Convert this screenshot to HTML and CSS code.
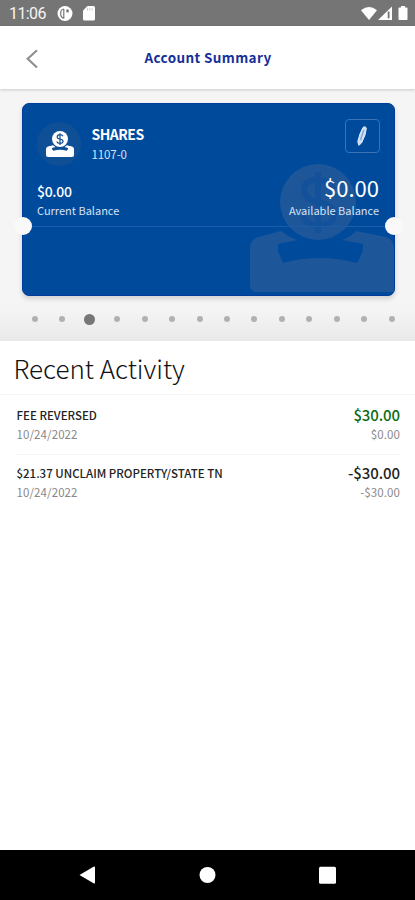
FILE: index.html
```html
<!DOCTYPE html>
<html lang="en">
<head>
<meta charset="utf-8">
<title>Account Summary</title>
<link rel="stylesheet" href="styles.css">
</head>
<body>
<div class="status">
  <span class="clock">11:06</span>
  <svg class="st-app" width="16" height="16" viewBox="0 0 16 16"><circle cx="8" cy="7.500" r="7.500" fill="#fff"/><path d="M6.800 3C4.500 3.200 3.700 5 3.700 7.500S4.500 11.800 6.800 12.100V3" fill="none" stroke="#757575" stroke-width="1.200"/><path d="M9.300 3.500h2.400v2.900h-2.400Z" fill="#757575"/></svg>
  <svg class="st-card" width="12" height="15" viewBox="0 0 12 15"><path d="M4.500 0H10.500Q12 0 12 1.500V13Q12 14.500 10.500 14.500H1.500Q0 14.500 0 13V4.500Z" fill="#fff"/><path d="M4.500 2v2.500M6.800 2v2.500M9.100 2v2.500" stroke="#d0d0d0" stroke-width="1"/></svg>
  <svg class="st-right" width="48" height="16" viewBox="0 0 48 16"><path d="M0 4.200Q8 -2 16 4.200L8 14Z" fill="#fff"/><path d="M31 0.500V14H17Z" fill="#fff"/><path d="M27.600 5.500V12.300" stroke="#757575" stroke-width="1.800"/><path d="M40 1.500V0h4v1.500h1.700q.8 0 .8.800v11q0 .8-.8.800h-7.400q-.8 0-.8-.8v-11q0-.8.8-.8Z" fill="#fff"/></svg>
</div>
<header class="header">
  <svg class="back" width="14" height="20" viewBox="0 0 14 20"><path d="M12 1.200L2.700 9.800L12 18.500" fill="none" stroke="#8e8f93" stroke-width="2.200"/></svg>
  <h1 class="title">Account Summary</h1>
</header>
<section class="carousel">
  <div class="card">
    <svg class="watermark" width="144" height="134" viewBox="0 0 144 134"><g fill="#1d5799"><circle cx="68" cy="41" r="38"/><path d="M0 87Q0 79 8 76L31 70Q40 77 48 79L28 83V90L33 102Q69 92 107 102L113 90V83L92 79Q99 77 106 70L136 76Q144 79 144 87V131H6Q0 131 0 123Z"/></g><path d="M83 28Q80 19 68 19Q54 19 54 29Q54 38 68 41Q84 44 84 54Q84 64 68 64Q55 64 53 54M68 11V72" fill="none" stroke="#13529a" stroke-width="6"/></svg>
    <div class="card-head">
      <div class="avatar"><svg width="30" height="27" viewBox="0 0 30 27"><circle cx="15" cy="8" r="8" fill="#fff"/><path d="M18 5.300Q17.300 3.700 15 3.700Q12.200 3.700 12.200 5.900Q12.200 7.600 15 8Q18 8.500 18 10.300Q18 12.400 15 12.400Q12.500 12.400 11.800 10.500M15 2.200V14" fill="none" stroke="#174f8b" stroke-width="1.200"/><path d="M1 18Q1 16 3 15.500L8 14.300L10.500 16L7 17V18.200L8.500 19.700Q15 17.700 21.500 19.700L23 18.200V17L19.500 16L22 14.300L27 15.500Q29 16 29 18V24Q29 26 27 26H3Q1 26 1 24Z" fill="#fff"/></svg></div>
      <div class="account"><div class="name">SHARES</div><div class="number">1107-0</div></div>
      <div class="edit"><svg width="14" height="22" viewBox="0 0 14 22"><path d="M8 2.500Q10.800 .8 11.300 3.500L10 10L6.500 18L3.800 20.300L2.800 16.500L5 9Z" fill="#c9dcf4" stroke="#e6effa" stroke-width="1"/><path d="M8.800 5L5.500 15" stroke="#7ba2d3" stroke-width="1.200"/></svg></div>
    </div>
    <div class="balances">
      <div><div class="current">$0.00</div><div class="label">Current Balance</div></div>
      <div class="right"><div class="available">$0.00</div><div class="label">Available Balance</div></div>
    </div>
    <div class="divider"></div>
    <i class="notch notch-left"></i><i class="notch notch-right"></i>
  </div>
  <div class="dots"><i></i><i></i><i class="active"></i><i></i><i></i><i></i><i></i><i></i><i></i><i></i><i></i><i></i><i></i><i></i></div>
</section>
<main class="activity">
  <h2 class="heading">Recent Activity</h2>
  <div class="row">
    <div><div class="desc">FEE REVERSED</div><div class="date">10/24/2022</div></div>
    <div class="right"><div class="amount credit">$30.00</div><div class="running">$0.00</div></div>
  </div>
  <div class="row">
    <div><div class="desc">$21.37 UNCLAIM PROPERTY/STATE TN</div><div class="date">10/24/2022</div></div>
    <div class="right"><div class="amount">-$30.00</div><div class="running">-$30.00</div></div>
  </div>
</main>
<nav class="navbar">
  <svg width="17" height="18" viewBox="0 0 17 18"><path d="M.5 9L14.500 .8Q16 .2 16 1.500V16.500Q16 17.800 14.500 17.200Z" fill="#fff"/></svg>
  <svg width="17" height="18" viewBox="0 0 17 18"><circle cx="8.500" cy="9" r="8" fill="#fff"/></svg>
  <svg width="17" height="18" viewBox="0 0 17 18"><rect x="0" y=".7" width="17" height="17" rx="1.500" fill="#fff"/></svg>
</nav>
</body>
</html>
```
FILE: styles.css
```css
* { box-sizing: border-box; }
body {
  margin: 0;
  width: 415px;
  height: 900px;
  overflow: hidden;
  display: flex;
  flex-direction: column;
  background: #fff;
  color: #222;
  font-family: "Noto Sans CJK SC", "Noto Sans", sans-serif;
}
h1, h2 { margin: 0; }
svg { display: block; flex: none; }
.right { text-align: right; }
.status {
  height: 26px;
  flex: none;
  background: #757575;
  display: flex;
  align-items: center;
  padding: 1px 14px 0 9px;
}
.clock {
  width: 48px;
  font: 400 16px/20px Roboto, sans-serif;
  letter-spacing: -0.6px;
  color: #f4f4f4;
}
.st-card { margin-left: 10px; }
.st-right { margin-left: auto; margin-right: -8px; }
.header {
  height: 63px;
  flex: none;
  display: grid;
  grid-template-columns: 50px 1fr 50px;
  align-items: center;
  box-shadow: 0 1px 3px rgba(0, 0, 0, 0.18);
  z-index: 1;
}
.back { margin-left: 25px; margin-top: 2px; }
.title {
  text-align: center;
  margin-bottom: 2px;
  padding-left: 1px;
  font-size: 13.500px;
  line-height: 20px;
  font-weight: 700;
  letter-spacing: 0.380px;
  color: #16309a;
}
.carousel {
  height: 252px;
  flex: none;
  padding: 13.500px 20.500px 0 21.500px;
  background: linear-gradient(#f5f5f5 0, #f5f5f5 87%, #e9e9e9 100%);
}
.card {
  height: 193.500px;
  position: relative;
  padding: 15px 14.500px 0;
  border-radius: 7px;
  background: #004a9c;
  border: 1px solid #003c9c;
  color: #fff;
  box-shadow: 0 3px 5px rgba(0, 0, 0, 0.15);
}
.watermark { position: absolute; right: 0; bottom: 0; }
.card-head, .balances { position: relative; display: flex; }
.card-head { height: 53px; }
.avatar {
  width: 44px;
  height: 44px;
  margin-top: 3px;
  border-radius: 50%;
  background: #0f4f95;
  display: flex;
  align-items: center;
  justify-content: center;
}
.avatar svg { margin: 2px 0 0 1px; }
.account { flex: 1; padding: 5px 0 0 10.500px; }
.name { font-size: 14px; line-height: 20px; font-weight: 700; letter-spacing: -0.5px; }
.number { font-size: 11.500px; line-height: 20px; color: #d8e3f3; letter-spacing: -0.1px; }
.edit {
  width: 35px;
  height: 34px;
  margin-right: -0.500px;
  border: 1px solid #3a72b4;
  border-radius: 4px;
  display: flex;
  align-items: center;
  justify-content: center;
}
.balances { justify-content: space-between; }
.current { margin-top: 8px; font-size: 14px; line-height: 22px; font-weight: 500; letter-spacing: -0.3px; }
.available { height: 30px; font-size: 22px; line-height: 30px; }
.label { font-size: 11px; line-height: 16px; color: #d6e2f4; }
.divider { position: relative; margin: 8px -9px 0; border-top: 1px solid #1d5ca8; }
.notch {
  position: absolute;
  top: 113.500px;
  width: 18px;
  height: 18px;
  border-radius: 50%;
  background: #f9f9f9;
}
.notch-left { left: -9px; }
.notch-right { right: -9px; }
.dots {
  display: grid;
  grid-template-columns: repeat(14, 27.450px);
  place-items: center;
  height: 12px;
  margin: 17px 0 0 -0.300px;
}
.dots i { width: 6px; height: 6px; border-radius: 50%; background: #b1b1b1; }
.dots .active { width: 11px; height: 11px; background: #777; }
.activity { flex: 1; }
.heading {
  height: 54px;
  padding-left: 13.500px;
  border-bottom: 1px solid #f4f4f4;
  font-size: 26px;
  line-height: 53px;
  font-weight: 300;
  color: #111;
}
.row {
  display: flex;
  justify-content: space-between;
  height: 58px;
  margin: 2px 15px 0 16.500px;
  padding-top: 8px;
}
.row + .row { margin-top: -1px; border-top: 1px solid #f4f4f4; }
.desc { font-size: 11.500px; line-height: 20px; font-weight: 500; }
.date, .running { font-size: 11.500px; line-height: 18px; color: #888; letter-spacing: 0.1px; }
.amount { font-size: 15px; line-height: 20px; font-weight: 500; letter-spacing: -0.1px; }
.credit { color: #0b6b12; }
.navbar {
  height: 50px;
  flex: none;
  background: #000;
  display: flex;
  align-items: center;
  justify-content: space-between;
  padding: 0 79px;
}
```
